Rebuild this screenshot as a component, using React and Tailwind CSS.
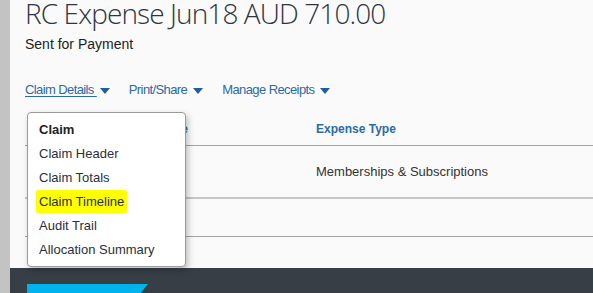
import React from 'react';

const Caret = () => (
  <svg width="10" height="6" viewBox="0 0 10 6" className="ml-[3px] mt-[2px]">
    <path d="M0 0 L10 0 L5 6 Z" fill="#1f5f9e" />
  </svg>
);

const items = ['Claim Header', 'Claim Totals', 'Claim Timeline', 'Audit Trail', 'Allocation Summary'];

const App = () => {
  return (
    <div className="w-[593px] h-[293px] flex bg-[#fafafa] overflow-hidden" style={{ fontFamily: '"Liberation Sans", Arial, sans-serif' }}>
      <div className="w-[10px] h-full bg-[#c3c3c3] shrink-0" />

      <div className="flex-1 flex flex-col relative">
        <div className="flex-1 flex flex-col">
          {/* header */}
          <div className="pl-[15px]">
            <h1 className="text-[28px] leading-[30px] mt-[-2px] font-light text-[#2f3542] tracking-[-0.9px] whitespace-nowrap" style={{ fontFamily: '"Open Sans", sans-serif' }}>
              RC Expense Jun18 AUD 710.00
            </h1>
            <p className="text-[14px] leading-[16px] text-[#222] mt-[8px]">Sent for Payment</p>
          </div>

          {/* menu */}
          <div className="flex items-center pl-[15px] mt-[30px] text-[13px] leading-[16px] tracking-[-0.6px] text-[#2a6aa8]">
            <span className="flex items-center">
              <span className="underline underline-offset-[2px] whitespace-pre">Claim Details </span>
              <Caret />
            </span>
            <span className="flex items-center ml-[19px] whitespace-pre">
              Print/Share{' '}
              <Caret />
            </span>
            <span className="flex items-center ml-[19px] whitespace-pre">
              Manage Receipts{' '}
              <Caret />
            </span>
          </div>

          {/* table */}
          <div className="mt-[15px] ml-[15px]">
            <div className="flex h-[33px] items-center border-b border-[#a3a3a3] text-[12px] font-bold text-[#2a6aa8]">
              <span className="w-[291px] pl-[137px]">Date</span>
              <span>Expense Type</span>
            </div>
            <div className="flex h-[53px] items-center border-b-2 border-[#c6c6c6] text-[13px] text-[#333]">
              <span className="w-[291px]" />
              <span>Memberships &amp; Subscriptions</span>
            </div>
            <div className="h-[38px] border-b border-[#a3a3a3]" />
          </div>
        </div>

        {/* footer */}
        <div className="h-[25px] bg-[#383e46] shrink-0 pt-[16px] pl-[17px]">
          <div className="w-[121px] h-[9px] bg-[#00b2ee]" style={{ clipPath: 'polygon(0 0, 100% 0, 94% 100%, 0 100%)' }} />
        </div>

        {/* dropdown */}
        <div className="absolute left-[17px] top-[112px] w-[159px] h-[155px] bg-white border border-[#9a9a9a] rounded-[4px] shadow-[2px_3px_6px_rgba(0,0,0,0.25)] pl-[11px] pt-[9px] text-[13px] text-[#2b2f3a]">
          <div className="h-[24px] leading-[16px] font-bold text-[#222]">Claim</div>
          {items.map((it) => (
            <div key={it} className="h-[24px] leading-[16px]">
              {it === 'Claim Timeline' ? (
                <span className="bg-[#ffff00] px-[3px] ml-[-3px] py-[4px] rounded-[2px]">{it}</span>
              ) : (
                it
              )}
            </div>
          ))}
        </div>
      </div>
    </div>
  );
};

export default App;
